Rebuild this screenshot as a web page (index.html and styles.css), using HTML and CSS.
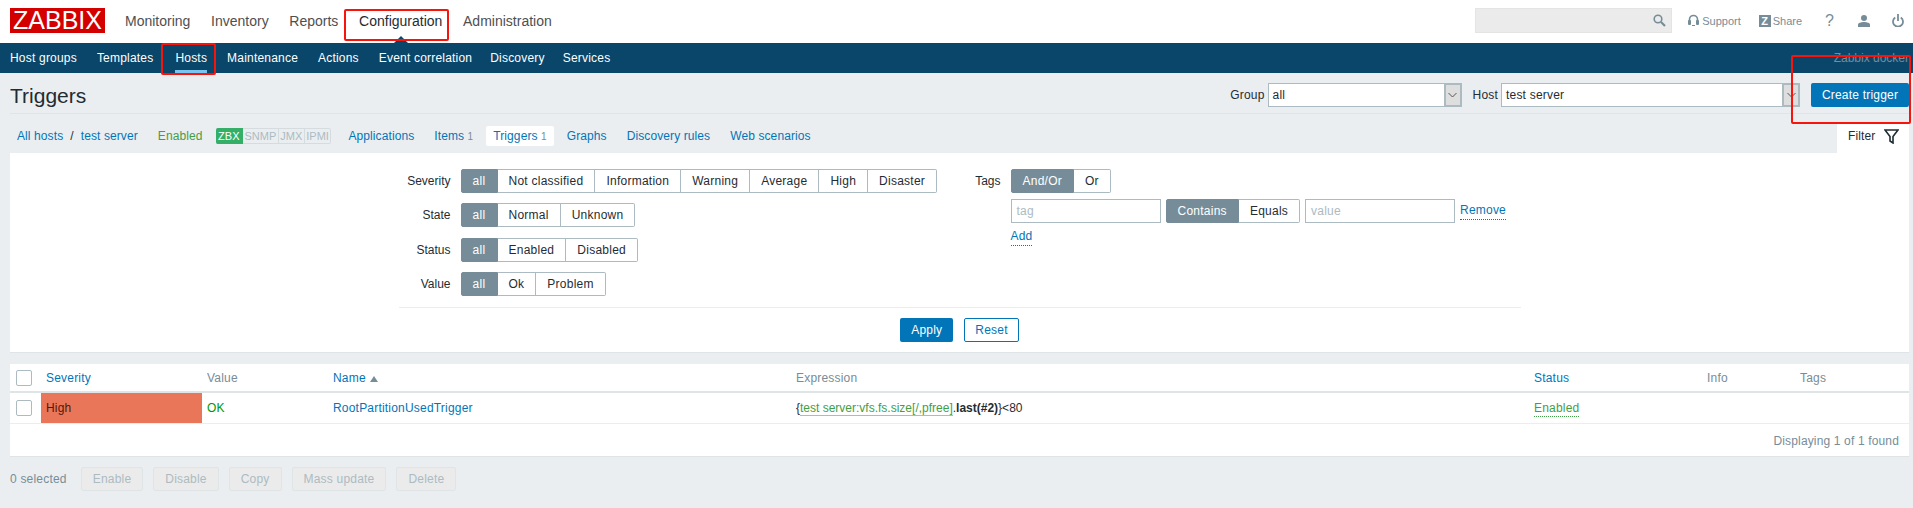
FILE: index.html
```html
<!DOCTYPE html>
<html lang="en">
<head>
    <meta charset="UTF-8">
    <title>Configuration of triggers</title>
    <link rel="stylesheet" href="styles.css">
</head>
<body>

<header class="top-nav">
    <div class="logo">ZABBIX</div>
    <nav class="main-menu">
        <a>Monitoring</a>
        <a>Inventory</a>
        <a>Reports</a>
        <a class="selected">Configuration</a>
        <a>Administration</a>
    </nav>
    <div class="top-tools">
        <div class="search">
            <svg width="13" height="13" viewBox="0 0 13 13"><circle cx="5" cy="5" r="3.8" fill="none" stroke="#768d99" stroke-width="1.6"/><path d="M8 8l4 4" stroke="#768d99" stroke-width="2.2"/></svg>
        </div>
        <a class="tool tool-support">
            <svg width="11" height="13" viewBox="0 0 11 13"><path d="M1.5 8V5.500a4 4 0 0 1 8 0V8" fill="none" stroke="#768d99" stroke-width="1.600"/><rect x="0" y="6" width="3" height="5" rx="1" fill="#768d99"/><rect x="8" y="6" width="3" height="5" rx="1" fill="#768d99"/><path d="M4 11.500h3" stroke="#768d99" stroke-width="1"/></svg>
            Support
        </a>
        <a class="tool tool-share"><span class="z-box">Z</span>Share</a>
        <a class="tool tool-help">?</a>
        <a class="tool tool-user">
            <svg width="12" height="12" viewBox="0 0 12 12"><circle cx="6" cy="3" r="3" fill="#768d99"/><path d="M0 12V9.500C0 8 3 7 6 7s6 1 6 2.500V12z" fill="#768d99"/></svg>
        </a>
        <a class="tool tool-power">
            <svg width="12" height="13" viewBox="0 0 12 13"><path d="M3.200 3.500a5 5 0 1 0 5.600 0" fill="none" stroke="#768d99" stroke-width="1.800"/><path d="M6 0v7" stroke="#768d99" stroke-width="1.800"/></svg>
        </a>
    </div>
</header>

<nav class="sub-nav">
    <a>Host groups</a>
    <a>Templates</a>
    <a class="selected">Hosts</a>
    <a>Maintenance</a>
    <a>Actions</a>
    <a class="tight">Event correlation</a>
    <a class="tight">Discovery</a>
    <a>Services</a>
    <span class="server-name">Zabbix docker</span>
</nav>

<main class="content">
    <div class="page-head">
        <h1>Triggers</h1>
        <div class="page-controls">
            <label>Group</label>
            <div class="select select-group"><span>all</span><i class="select-arrow"><svg width="9" height="6" viewBox="0 0 9 6"><path d="M.5 1l4 4 4-4" fill="none" stroke="#555" stroke-width="1"/></svg></i></div>
            <label>Host</label>
            <div class="select select-host"><span>test server</span><i class="select-arrow"><svg width="9" height="6" viewBox="0 0 9 6"><path d="M.5 1l4 4 4-4" fill="none" stroke="#555" stroke-width="1"/></svg></i></div>
            <button class="btn btn-primary btn-create">Create trigger</button>
        </div>
    </div>

    <div class="host-nav">
        <a class="crumb">All hosts</a>
        <span class="crumb-sep">/</span>
        <a class="crumb">test server</a>
        <span class="host-status">Enabled</span>
        <div class="badges">
            <span class="badge on">ZBX</span><span class="badge">SNMP</span><span class="badge">JMX</span><span class="badge">IPMI</span>
        </div>
        <a class="host-tab">Applications</a>
        <a class="host-tab">Items <sup>1</sup></a>
        <a class="host-tab active">Triggers <sup>1</sup></a>
        <a class="host-tab">Graphs</a>
        <a class="host-tab">Discovery rules</a>
        <a class="host-tab">Web scenarios</a>
        <div class="filter-tab">
            Filter
            <svg width="15" height="15" viewBox="0 0 15 15"><path d="M1 1h13L9 7.500v6.500l-3-2V7.500z" fill="none" stroke="#1f2c33" stroke-width="1.600"/></svg>
        </div>
    </div>

    <section class="filter">
        <div class="filter-inner">
            <div class="filter-columns">
                <div class="filter-left">
                    <label>Severity</label>
                    <div class="radio-group">
                        <span class="on first-all">all</span><span>Not classified</span><span>Information</span><span>Warning</span><span>Average</span><span>High</span><span>Disaster</span>
                    </div>
                    <label>State</label>
                    <div class="radio-group">
                        <span class="on first-all">all</span><span>Normal</span><span>Unknown</span>
                    </div>
                    <label>Status</label>
                    <div class="radio-group">
                        <span class="on first-all">all</span><span>Enabled</span><span>Disabled</span>
                    </div>
                    <label>Value</label>
                    <div class="radio-group">
                        <span class="on first-all">all</span><span>Ok</span><span>Problem</span>
                    </div>
                </div>
                <div class="filter-right">
                    <label>Tags</label>
                    <div class="tag-area">
                        <div class="radio-group">
                            <span class="on">And/Or</span><span>Or</span>
                        </div>
                        <div class="tag-row">
                            <div class="text-input">tag</div>
                            <div class="radio-group">
                                <span class="on">Contains</span><span>Equals</span>
                            </div>
                            <div class="text-input">value</div>
                            <a class="link-action">Remove</a>
                        </div>
                        <a class="link-action add-link">Add</a>
                    </div>
                </div>
            </div>
            <div class="filter-buttons">
                <button class="btn btn-primary">Apply</button>
                <button class="btn btn-outline">Reset</button>
            </div>
        </div>
    </section>

    <section class="list">
        <table class="trigger-table">
            <colgroup>
                <col class="col-check"><col class="col-severity"><col class="col-value"><col class="col-name"><col class="col-expr"><col class="col-status"><col class="col-info"><col class="col-tags">
            </colgroup>
            <thead>
                <tr>
                    <th><span class="checkbox"></span></th>
                    <th><a>Severity</a></th>
                    <th>Value</th>
                    <th><a>Name</a><i class="sort-arrow"></i></th>
                    <th>Expression</th>
                    <th><a>Status</a></th>
                    <th>Info</th>
                    <th>Tags</th>
                </tr>
            </thead>
            <tbody>
                <tr>
                    <td><span class="checkbox"></span></td>
                    <td class="sev-high">High</td>
                    <td class="val-ok">OK</td>
                    <td><a>RootPartitionUsedTrigger</a></td>
                    <td class="expr">{<span class="expr-item">test server:vfs.fs.size[/,pfree]</span>.<b>last(#2)</b>}&lt;80</td>
                    <td><a class="status-on">Enabled</a></td>
                    <td></td>
                    <td></td>
                </tr>
            </tbody>
        </table>
        <div class="list-footer">Displaying 1 of 1 found</div>
    </section>

    <div class="mass-actions">
        <span class="selected-count">0 selected</span>
        <button class="btn btn-disabled">Enable</button>
        <button class="btn btn-disabled">Disable</button>
        <button class="btn btn-disabled">Copy</button>
        <button class="btn btn-disabled">Mass update</button>
        <button class="btn btn-disabled">Delete</button>
    </div>
</main>

<!-- red boxes drawn on top of the screenshot -->
<div class="mark mark-config"></div>
<div class="mark mark-hosts"></div>
<div class="mark mark-create"></div>

</body>
</html>
```

FILE: styles.css
```css
* {
    box-sizing: border-box;
}

html {
    height: 100%;
    overflow: hidden;
}

body {
    margin: 0;
    font-family: "Liberation Sans", Arial, sans-serif;
    font-size: 12px;
    line-height: 14px;
    letter-spacing: 0.2px;
    color: #1f2c33;
    background-color: #ebeef0;
}

a {
    color: #0275b8;
}

/* top menu */
.top-nav {
    display: flex;
    align-items: center;
    height: 43px;
    padding: 0 9px 2px 10px;
    background: #fff;
}

.logo {
    width: 95px;
    height: 25px;
    background: #d40000;
    color: #fff;
    font-size: 25px;
    line-height: 25px;
    letter-spacing: 0;
    text-align: center;
}

.main-menu {
    display: flex;
    margin-left: 20px;
    font-size: 14px;
    line-height: 18px;
    letter-spacing: 0;
}

.main-menu a {
    position: relative;
    margin-right: 20.7px;
    color: #4f4f4f;
}

.main-menu a.selected {
    color: #1f2c33;
}

.main-menu a.selected::after {
    content: "";
    position: absolute;
    left: 50%;
    bottom: -13px;
    margin-left: -7px;
    border: 7px solid transparent;
    border-top-width: 0;
    border-bottom-color: #0a466a;
}

.top-tools {
    display: flex;
    align-items: center;
    margin-left: auto;
    font-size: 11px;
    letter-spacing: 0;
    color: #768d99;
}

.search {
    display: flex;
    align-items: center;
    justify-content: flex-end;
    width: 197px;
    height: 25px;
    padding-right: 5px;
    background: #ebebeb;
    border: 1px solid #e4e4e4;
}

.tool {
    display: flex;
    align-items: center;
    color: #768d99;
}

.tool svg {
    display: block;
}

.tool-support {
    gap: 3px;
    margin-left: 16px;
}

.tool-share {
    margin-left: 18px;
}

.z-box {
    width: 12px;
    height: 12px;
    margin-right: 2px;
    background: #768d99;
    color: #fff;
    font-size: 11px;
    line-height: 12px;
    font-weight: bold;
    text-align: center;
}

.tool-help {
    margin-left: 23px;
    font-size: 16px;
}

.tool-user {
    margin-left: 24px;
}

.tool-power {
    margin-left: 22px;
}

/* second menu */
.sub-nav {
    display: flex;
    align-items: center;
    height: 30px;
    padding: 0 4px 0 10px;
    background: #0a466a;
}

.sub-nav a {
    position: relative;
    margin-right: 20px;
    color: #fff;
}

.sub-nav a.tight {
    margin-right: 18px;
}

.sub-nav a.selected {
    margin-left: 2px;
}

.sub-nav a.selected::after {
    content: "";
    position: absolute;
    left: 0;
    right: 0;
    top: 19px;
    height: 4px;
    background: #7cc4f0;
}

.server-name {
    margin-left: auto;
    letter-spacing: 0;
    color: #768d99;
}

/* page */
.content {
    padding: 0 4px 0 10px;
}

.page-head {
    display: flex;
    align-items: center;
    justify-content: space-between;
    height: 41px;
    padding-top: 3px;
    border-bottom: 1px solid #dfe4e7;
}

h1 {
    margin: 2px 0 0;
    font-size: 21px;
    line-height: 24px;
    font-weight: normal;
    letter-spacing: 0;
}

.page-controls {
    display: flex;
    align-items: center;
}

.page-controls label {
    margin-right: 3px;
}

.select {
    display: flex;
    justify-content: space-between;
    height: 24px;
    padding-left: 4px;
    background: #fff;
    border: 1px solid #acbbc2;
    line-height: 22px;
}

.select-group {
    width: 194px;
    margin-right: 11px;
}

.select-host {
    width: 299px;
}

.select-arrow {
    display: flex;
    align-items: center;
    justify-content: center;
    width: 18px;
    margin: -1px -1px -1px 0;
    background: #dedede;
    border: 2px solid #acbbc2;
}

.btn {
    height: 24px;
    padding: 0 10px;
    font: inherit;
    letter-spacing: inherit;
    white-space: nowrap;
    border-radius: 2px;
    border: 1px solid transparent;
}

.btn-primary {
    background: #0275b8;
    color: #fff;
}

.btn-outline {
    background: #fff;
    color: #0275b8;
    border-color: #0275b8;
}

.btn-create {
    width: 98px;
    margin-left: 11px;
    padding: 0;
}

.btn-disabled {
    padding: 0 11px;
    background: #ebebeb;
    color: #acbbc2;
    border-color: #dfe4e7;
}

/* host breadcrumbs and tabs */
.host-nav {
    display: flex;
    align-items: flex-start;
    height: 39px;
    padding: 12px 0 0 7px;
    letter-spacing: 0.1px;
}

.host-nav > a,
.host-nav > span {
    line-height: 21px;
}

.crumb-sep {
    margin: 0 7px;
}

.host-status {
    margin-left: 20px;
    color: #429e47;
}

.badges {
    display: flex;
    height: 16px;
    margin: 2px 10px 0 13px;
    letter-spacing: 0;
}

.badge {
    padding: 0 1.5px;
    font-size: 11px;
    line-height: 14px;
    color: #acbbc2;
    background: #ebeef0;
    border: 1px solid #d5dce0;
    border-left-width: 0;
}

.badge:last-child {
    border-radius: 0 2px 2px 0;
}

.badge.on {
    background: #34af67;
    border-color: #34af67;
    border-radius: 2px 0 0 2px;
    padding: 0 2.5px;
    color: #fff;
}

.host-tab {
    height: 20px;
    margin-right: 6px;
    padding: 0 7px;
}

.host-tab sup {
    font-size: 10px;
    line-height: 0;
    vertical-align: baseline;
    color: #768d99;
}

.host-tab.active {
    background: #fff;
    border-radius: 2px;
}

.filter-tab {
    display: flex;
    align-items: center;
    align-self: flex-start;
    gap: 9px;
    width: 72px;
    height: 29px;
    margin: -2px 0 0 auto;
    padding: 0 0 5px 11px;
    background: #fff;
}

/* filter box */
.filter {
    height: 200px;
    padding-top: 16px;
    background: #fff;
    border-bottom: 1px solid #dfe4e7;
}

.filter-inner {
    width: 1122px;
    margin: 0 auto;
}

.filter-columns {
    display: grid;
    grid-template-columns: 575px 1fr;
    height: 139px;
    border-bottom: 1px solid #ebeef0;
}

.filter-left {
    display: grid;
    grid-template-columns: 52px 1fr;
    grid-template-rows: repeat(4, 24px);
    gap: 10.4px 10px;
    align-items: center;
}

.filter-left label,
.filter-right label {
    text-align: right;
    letter-spacing: 0;
}

.filter-right {
    display: grid;
    grid-template-columns: 27px 1fr;
    gap: 10px;
    align-items: start;
}

.filter-right label {
    line-height: 24px;
}

.radio-group {
    display: inline-flex;
    vertical-align: top;
    letter-spacing: 0.25px;
}

.radio-group span {
    height: 24px;
    padding: 0 11px;
    background: #fff;
    border: 1px solid #acbbc2;
    border-left-width: 0;
    line-height: 22px;
}

.radio-group span:first-child {
    border-left-width: 1px;
    border-radius: 2px 0 0 2px;
}

.radio-group span:last-child {
    border-radius: 0 2px 2px 0;
}

.radio-group span.on {
    background: #768d99;
    border-color: #768d99;
    color: #fff;
}

.radio-group span.first-all {
    width: 37px;
    text-align: center;
    padding: 0;
}

.tag-row {
    display: flex;
    gap: 5px;
    margin-top: 6px;
}

.text-input {
    width: 150px;
    height: 24px;
    padding-left: 5px;
    background: #fff;
    border: 1px solid #acbbc2;
    color: #acbbc2;
    line-height: 22px;
}

.link-action {
    align-self: flex-start;
    margin-top: 4px;
    padding-bottom: 2px;
    border-bottom: 1px dotted #0275b8;
}

.add-link {
    display: inline-block;
    margin-top: 6px;
}

.filter-buttons {
    display: flex;
    justify-content: center;
    gap: 11px;
    padding-top: 10px;
}

/* trigger list */
.list {
    margin-top: 11px;
    background: #fff;
    border-bottom: 1px solid #dfe4e7;
}

.trigger-table {
    width: 100%;
    border-collapse: collapse;
    table-layout: fixed;
}

.col-check { width: 31px; }
.col-severity { width: 161px; }
.col-value { width: 126px; }
.col-name { width: 463px; }
.col-expr { width: 738px; }
.col-status { width: 173px; }
.col-info { width: 93px; }

.trigger-table th {
    height: 28px;
    padding: 0 5px;
    font-weight: normal;
    text-align: left;
    color: #768d99;
    border-bottom: 2px solid #dfe4e7;
}

.trigger-table td {
    height: 31px;
    padding: 1px 5px 0;
    border-bottom: 1px solid #ebeef0;
}

.checkbox {
    display: block;
    width: 16px;
    height: 16px;
    margin-left: 1px;
    background: #fff;
    border: 1px solid #acbbc2;
    border-radius: 2px;
}

.sort-arrow {
    display: inline-block;
    margin-left: 4px;
    border: 4px solid transparent;
    border-top-width: 0;
    border-bottom: 6px solid #768d99;
}

.trigger-table .sev-high {
    background: #e97659;
    background-clip: padding-box;
    color: #52190b;
}

.val-ok {
    color: #009900;
}

.expr {
    letter-spacing: 0;
}

.expr-item {
    color: #429e47;
    border-bottom: 1px solid #acbbc2;
}

.status-on {
    padding-bottom: 1px;
    color: #429e47;
    border-bottom: 1px dotted #429e47;
}

.list-footer {
    height: 32px;
    padding: 1px 10px 0 0;
    line-height: 32px;
    letter-spacing: 0.15px;
    text-align: right;
    color: #768d99;
}

.mass-actions {
    display: flex;
    align-items: center;
    gap: 10px;
    margin-top: 10px;
}

.selected-count {
    margin-right: 4px;
    color: #768d99;
}

/* red annotation boxes */
.mark {
    position: absolute;
    border: 2px solid #f6140c;
    border-radius: 2px;
}

.mark-config {
    left: 344px;
    top: 9px;
    width: 105px;
    height: 32px;
}

.mark-hosts {
    left: 161px;
    top: 43px;
    width: 55px;
    height: 32px;
}

.mark-create {
    left: 1791px;
    top: 55px;
    width: 120px;
    height: 69px;
}
```
